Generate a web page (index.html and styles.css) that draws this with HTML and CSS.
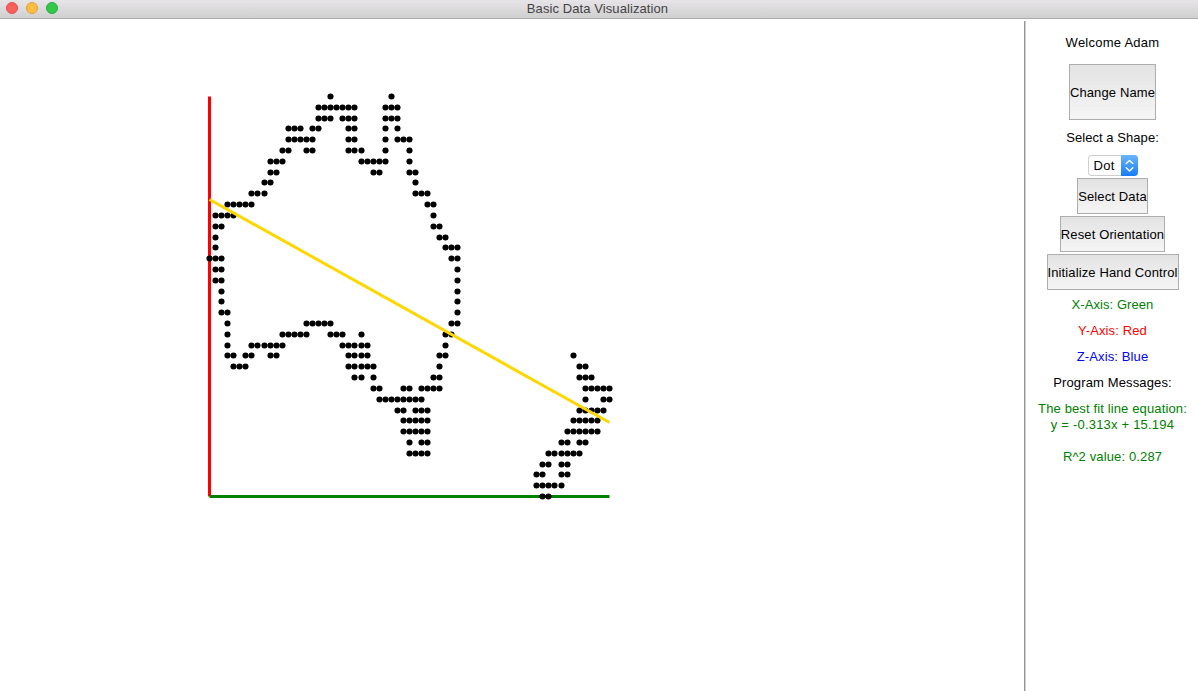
FILE: index.html
```html
<!DOCTYPE html>
<html lang="en">
<head>
<meta charset="utf-8">
<title>Basic Data Visualization</title>
<link rel="stylesheet" href="styles.css">
</head>
<body>
<div class="window">
  <header class="titlebar">
    <div class="lights">
      <span class="light close"></span>
      <span class="light minimize"></span>
      <span class="light maximize"></span>
    </div>
    <h1 class="title">Basic Data Visualization</h1>
  </header>
  <div class="content">
    <main class="plot">
      <svg width="1024" height="672" viewBox="0 19 1024 672">
        <line class="axis-y" x1="209.5" y1="96.5" x2="209.5" y2="496.5"/>
        <line class="axis-x" x1="209.5" y1="496.5" x2="609.5" y2="496.5"/>
        <g id="dots"></g>
        <line class="fit" x1="209.5" y1="199.5" x2="609.5" y2="422.5"/>
      </svg>
    </main>
    <aside class="sidebar">
      <p class="label welcome">Welcome Adam</p>
      <button class="button change">Change Name</button>
      <p class="label shape">Select a Shape:</p>
      <div class="select">
        <span class="value">Dot</span>
        <span class="stepper">
          <svg width="17" height="21" viewBox="0 0 17 21"><path d="M5.2 8.6 8.5 5.4l3.3 3.2M5.2 12.7l3.3 3.2 3.3-3.2"/></svg>
        </span>
      </div>
      <button class="button data">Select Data</button>
      <button class="button reset">Reset Orientation</button>
      <button class="button hand">Initialize Hand Control</button>
      <p class="label green x-axis">X-Axis: Green</p>
      <p class="label red">Y-Axis: Red</p>
      <p class="label blue">Z-Axis: Blue</p>
      <p class="label">Program Messages:</p>
      <p class="label green">The best fit line equation:<br><span class="equation">y = -0.313x + 15.194</span><br><br>R^2 value: 0.287</p>
    </aside>
  </div>
</div>
<script src="plot.js"></script>
</body>
</html>
```
FILE: plot.js
```js
// Columns holding a point, one entry per row from the top; "a-b" is a run.
const rows = [
  "20 30", "18-24 29-31", "18-20 22-24 29-31", "13-15 17-18 23-24 29 31",
  "13-17 23-24 29 31-33", "12-13 16-17 23-25 29 33", "10-12 25-29 33",
  "10-11 27-28 33-34", "9-10 34", "7-9 34-36", "3-7 36-37", "1-4 37",
  "1-2 37-38", "1 38-39", "1 39-41", "0-2 40-41", "1-2 41", "1-2 41",
  "2 41", "2 41", "2-3 41", "3 16-20 40-41", "3 12-16 20-22 25 39-40",
  "3 7-12 22-26 39", "3-4 6-7 10-11 23-26 38-39 60", "4-6 23-27 38 61-62",
  "24-25 27 37-38 61-63", "27-28 32-33 35-38 62-66", "28-35 62 65-66",
  "31-32 34-36 61-65", "32-36 60-64", "32-36 59-64", "33 35-36 58-59 61-62",
  "33-36 56-61", "55-56 58-59", "54-55 58-59", "54-58", "55-56"
];
const group = document.getElementById("dots");
rows.forEach((row, r) => {
  for (const run of row.split(" ")) {
    const [from, to = from] = run.split("-").map(Number);
    for (let c = from; c <= to; c++) {
      const dot = document.createElementNS("http://www.w3.org/2000/svg", "circle");
      dot.setAttribute("cx", 209.5 + Math.round(c * 400 / 66));
      dot.setAttribute("cy", 96.5 + Math.round(r * 400 / 37));
      dot.setAttribute("r", 3.05);
      group.appendChild(dot);
    }
  }
});
```
FILE: styles.css
```css
* { box-sizing: border-box; }
body { margin: 0; background: #fff; font-family: "Liberation Sans", Arial, sans-serif; font-size: 13px; color: #000; overflow: hidden; }
.window { display: flex; flex-direction: column; width: 1198px; height: 691px; }
.titlebar { display: grid; grid-template-columns: 70px 1fr 73px; align-items: center; height: 19px; background: linear-gradient(#e7e4e7, #d0d0d0); border-bottom: 1px solid #aaa; flex: none; }
.lights { display: flex; gap: 8px; padding: 0 0 2px 6px; }
.light { width: 12px; height: 12px; border-radius: 50%; border: 1px solid; }
.close { background: #fc605b; border-color: #e2504c; }
.minimize { background: #fdbd41; border-color: #dfa03a; }
.maximize { background: #34c84a; border-color: #2cab3d; }
.title { margin: 0 0 1px; text-align: center; font-size: 13px; line-height: 16px; font-weight: 400; letter-spacing: 0.09px; color: #454345; white-space: nowrap; }
.content { display: flex; flex: 1; min-height: 0; }
.plot { width: 1024px; }
.plot svg { display: block; }
.axis-x { stroke: #008000; stroke-width: 3; }
.axis-y { stroke: #f00; stroke-width: 3; }
.fit { stroke: #ffd700; stroke-width: 3; }
.sidebar { display: flex; flex-direction: column; align-items: center; width: 174px; margin-top: 2px; padding: 14px 0 0 2px; border-left: 1px solid #939597; box-shadow: inset 1px 0 #d0d0d0; letter-spacing: 0.13px; }
.label { margin: 0 0 10px; line-height: 16px; text-align: center; white-space: nowrap; }
.welcome { margin-bottom: 13px; letter-spacing: 0.25px; }
.shape { margin-bottom: 9px; letter-spacing: 0.06px; }
.x-axis { letter-spacing: 0.07px; }
.equation { letter-spacing: 0.2px; }
.green { color: #008000; }
.red { color: #f00; }
.blue { color: #00f; }
.button { display: flex; align-items: center; justify-content: center; height: 36px; margin: 0 0 2px; padding: 0; border: 1px solid #adadad; border-radius: 0; background: linear-gradient(#e3e3e3, #f5f5f5); font: inherit; letter-spacing: inherit; color: inherit; white-space: nowrap; flex: none; }
.change { width: 87px; height: 56px; margin-bottom: 10px; }
.data { width: 71px; }
.reset { width: 105px; }
.hand { width: 132px; margin-bottom: 7px; }
.select { display: flex; width: 50px; height: 21px; margin-bottom: 2px; border-radius: 4px; overflow: hidden; box-shadow: inset 0 0 0 1px #cfcfcf; flex: none; }
.value { flex: 1; padding-left: 6px; line-height: 21px; letter-spacing: 0.3px; }
.stepper { width: 17px; height: 21px; background: linear-gradient(#6bb3fa, #157efb); }
.stepper svg { display: block; fill: none; stroke: #fff; stroke-width: 1.4; stroke-linecap: round; stroke-linejoin: round; }
```
